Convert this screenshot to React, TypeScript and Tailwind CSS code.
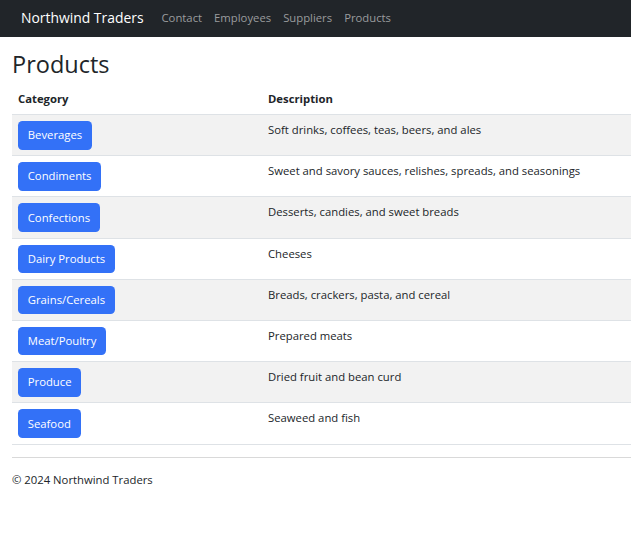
import React from "react";

const rows = [
  ["Beverages", "Soft drinks, coffees, teas, beers, and ales"],
  ["Condiments", "Sweet and savory sauces, relishes, spreads, and seasonings"],
  ["Confections", "Desserts, candies, and sweet breads"],
  ["Dairy Products", "Cheeses"],
  ["Grains/Cereals", "Breads, crackers, pasta, and cereal"],
  ["Meat/Poultry", "Prepared meats"],
  ["Produce", "Dried fruit and bean curd"],
  ["Seafood", "Seaweed and fish"],
];

export default function App() {
  return (
    <div className="min-h-[547px] bg-white text-[#212529] text-[11.3px] leading-[18px] [font-family:'Open_Sans',sans-serif]">
      <nav className="h-[37px] bg-[#212529] flex items-center pl-[21px] pb-[2px]">
        <span className="text-white text-[13.9px] mr-[12px]">Northwind Traders</span>
        <div className="flex">
          {["Contact", "Employees", "Suppliers", "Products"].map((l) => (
            <span key={l} className="px-[6px] text-[#9a9c9e]">{l}</span>
          ))}
        </div>
      </nav>
      <main className="pl-[12px]">
        <h1 className="text-[23.5px] leading-[31px] font-medium mt-[12px] mb-[5px]">Products</h1>
        <div>
          <div className="flex h-[30px] border-b border-[#dee2e6] font-bold pt-[5px]">
            <div className="w-[250px] px-[6px]">Category</div>
            <div className="px-[6px]">Description</div>
          </div>
          {rows.map(([c, d], i) => (
            <div
              key={c}
              className={`flex h-[41.2px] border-b border-[#dee2e6] pt-[6px] ${i % 2 === 0 ? "bg-[#f2f2f2]" : "bg-white"}`}
            >
              <div className="w-[250px] px-[6px]">
                <span className="inline-block h-[28.5px] px-[9.75px] py-[5.25px] rounded-[4.5px] bg-[#3371f7] text-white">{c}</span>
              </div>
              <div className="px-[6px]">{d}</div>
            </div>
          ))}
        </div>
        <footer className="mt-[12px] border-t border-[#d9d9d9] pt-[13px]">
          © 2024 Northwind Traders
        </footer>
      </main>
    </div>
  );
}
